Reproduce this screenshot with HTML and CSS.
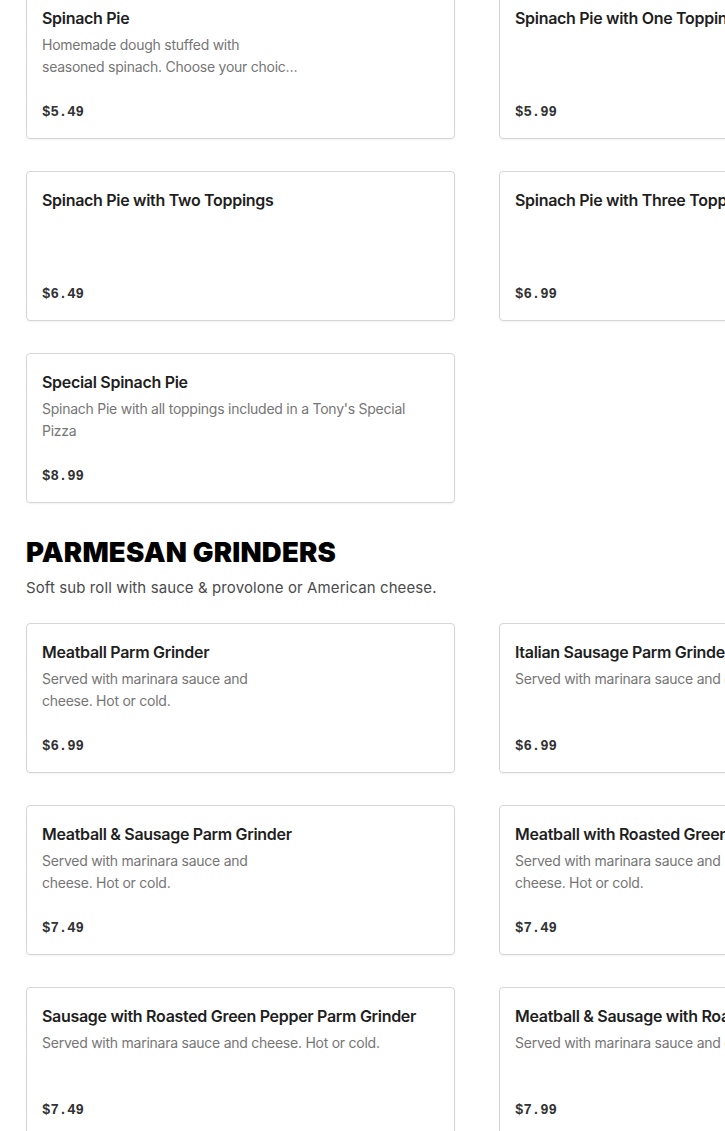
FILE: index.html
```html
<!DOCTYPE html>
<html lang="en">
<head>
<meta charset="utf-8">
<title>Menu</title>
<link rel="stylesheet" href="styles.css">
</head>
<body>
<main class="page">
  <section class="section section--first">
    <div class="grid">
      <article class="card card--img">
        <h3 class="card__title">Spinach Pie</h3>
        <p class="card__desc">Homemade dough stuffed with seasoned spinach. Choose your choice of toppings.</p>
        <div class="card__price">$5.49</div>
      </article>
      <article class="card">
        <h3 class="card__title">Spinach Pie with One Topping</h3>
        <p class="card__desc"></p>
        <div class="card__price">$5.99</div>
      </article>
      <article class="card">
        <h3 class="card__title">Spinach Pie with Two Toppings</h3>
        <p class="card__desc"></p>
        <div class="card__price">$6.49</div>
      </article>
      <article class="card">
        <h3 class="card__title">Spinach Pie with Three Toppings</h3>
        <p class="card__desc"></p>
        <div class="card__price">$6.99</div>
      </article>
      <article class="card">
        <h3 class="card__title">Special Spinach Pie</h3>
        <p class="card__desc">Spinach Pie with all toppings included in a Tony's Special Pizza</p>
        <div class="card__price">$8.99</div>
      </article>
    </div>
  </section>

  <section class="section">
    <h2 class="section__title">PARMESAN GRINDERS</h2>
    <p class="section__sub">Soft sub roll with sauce &amp; provolone or American cheese.</p>
    <div class="grid">
      <article class="card card--img">
        <h3 class="card__title">Meatball Parm Grinder</h3>
        <p class="card__desc">Served with marinara sauce and cheese. Hot or cold.</p>
        <div class="card__price">$6.99</div>
      </article>
      <article class="card">
        <h3 class="card__title">Italian Sausage Parm Grinder</h3>
        <p class="card__desc">Served with marinara sauce and cheese. Hot or cold.</p>
        <div class="card__price">$6.99</div>
      </article>
      <article class="card card--img">
        <h3 class="card__title">Meatball &amp; Sausage Parm Grinder</h3>
        <p class="card__desc">Served with marinara sauce and cheese. Hot or cold.</p>
        <div class="card__price">$7.49</div>
      </article>
      <article class="card card--img">
        <h3 class="card__title">Meatball with Roasted Green Pepper Parm Grinder</h3>
        <p class="card__desc">Served with marinara sauce and cheese. Hot or cold.</p>
        <div class="card__price">$7.49</div>
      </article>
      <article class="card">
        <h3 class="card__title">Sausage with Roasted Green Pepper Parm Grinder</h3>
        <p class="card__desc">Served with marinara sauce and cheese. Hot or cold.</p>
        <div class="card__price">$7.49</div>
      </article>
      <article class="card">
        <h3 class="card__title">Meatball &amp; Sausage with Roasted Green Pepper Parm Grinder</h3>
        <p class="card__desc">Served with marinara sauce and cheese. Hot or cold.</p>
        <div class="card__price">$7.99</div>
      </article>
    </div>
  </section>
</main>
</body>
</html>
```

FILE: styles.css
```css
html, body {
  margin: 0;
  padding: 0;
  background: #ffffff;
  overflow: hidden;
}

body {
  font-family: Inter, "Noto Sans", "Liberation Sans", sans-serif;
  color: #191919;
}

.page {
  width: 902px;
  padding: 0 0 40px 26px;
  margin-top: -11px;
}

.section--first {
  margin-bottom: 31px;
}

.section__title {
  margin: 0;
  font-family: Inter, "Liberation Sans", sans-serif;
  font-weight: 900;
  font-size: 27.5px;
  line-height: 36px;
  letter-spacing: 0.2px;
  color: #000;
}

.section__sub {
  margin: 0 0 17px 0;
  font-size: 15px;
  line-height: 36px;
  letter-spacing: 0.1px;
  color: #4b4b4b;
}

.grid {
  display: grid;
  grid-template-columns: 429px 429px;
  column-gap: 44px;
  row-gap: 32px;
}

.card {
  box-sizing: border-box;
  height: 150px;
  border: 1px solid #d6d6d6;
  border-radius: 4px;
  box-shadow: 0 1px 2px rgba(0, 0, 0, 0.06);
  padding: 16px 16px 16px 15px;
  display: flex;
  flex-direction: column;
}

.card__title {
  margin: 0;
  font-size: 16px;
  line-height: 25px;
  font-weight: 600;
  letter-spacing: -0.3px;
  color: #1f1f1f;
  white-space: nowrap;
}

.card__desc {
  margin: 3px 0 0 0;
  font-size: 14px;
  line-height: 22px;
  letter-spacing: -0.25px;
  height: 44px;
  color: #767676;
  display: -webkit-box;
  -webkit-line-clamp: 2;
  -webkit-box-orient: vertical;
  overflow: hidden;
}

.card--img .card__desc {
  max-width: 256px;
}

.card__price {
  margin-top: auto;
  font-family: "Liberation Mono", "DejaVu Sans Mono", monospace;
  font-weight: 700;
  font-size: 14px;
  line-height: 20px;
  color: #333;
}
```
